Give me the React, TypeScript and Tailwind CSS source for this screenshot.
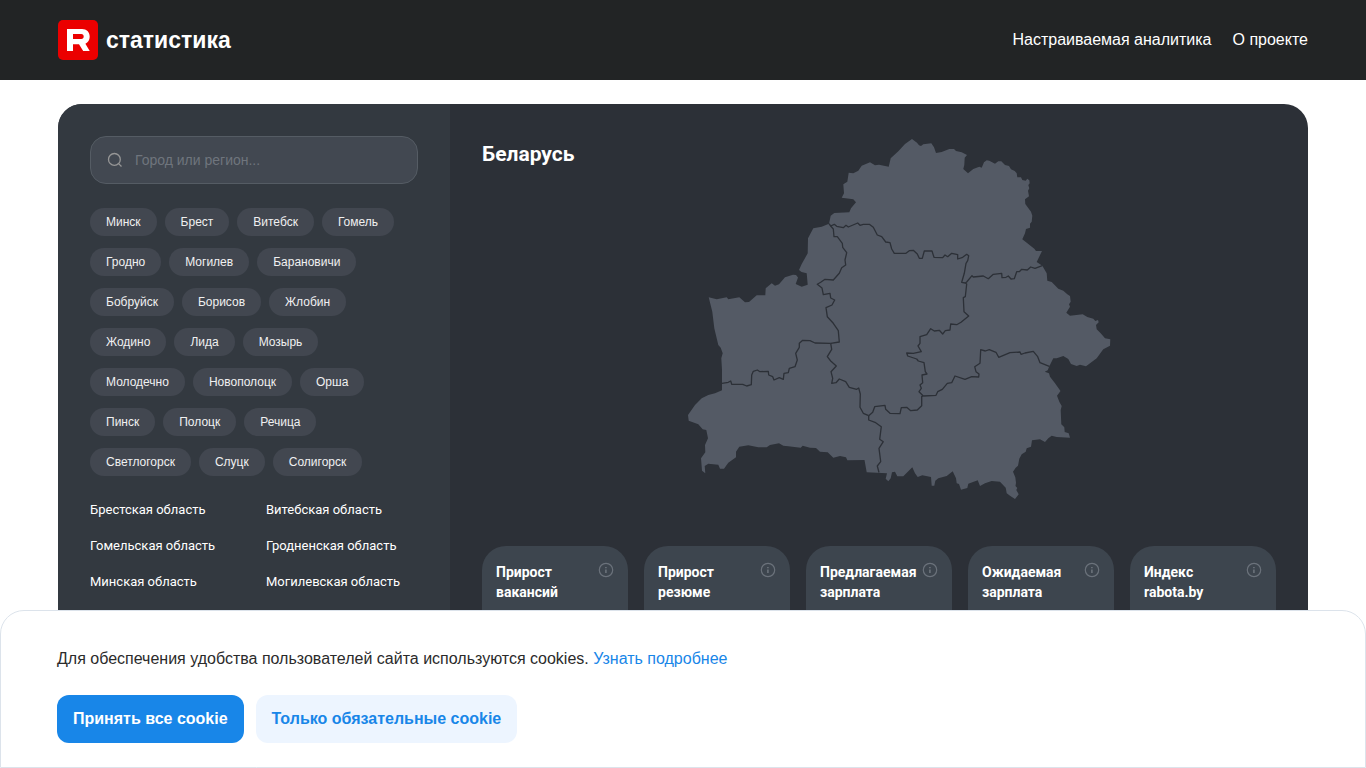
import React from 'react';

const cities = [
  'Минск', 'Брест', 'Витебск', 'Гомель', 'Гродно', 'Могилев', 'Барановичи',
  'Бобруйск', 'Борисов', 'Жлобин', 'Жодино', 'Лида', 'Мозырь', 'Молодечно',
  'Новополоцк', 'Орша', 'Пинск', 'Полоцк', 'Речица', 'Светлогорск', 'Слуцк',
  'Солигорск',
];

const regions = [
  'Брестская область',
  'Витебская область',
  'Гомельская область',
  'Гродненская область',
  'Минская область',
  'Могилевская область',
];

const stats = [
  'Прирост вакансий',
  'Прирост резюме',
  'Предлагаемая зарплата',
  'Ожидаемая зарплата',
  'Индекс rabota.by',
];

// Country outline, clockwise from the northernmost point
const outline =
  'M912 139 L917 142.7 919 145.3 921 146 923.3 144.3 931.3 143.3 934 147.3 936 153 941.7 152 949.3 149 954 149 956 151 961.7 152.3 967 155 964.7 157.7 964.3 165 963.3 169 968 173.3 973.3 169 979.3 166.7 981.7 167.7 984 162.3 986.7 160.3 989.3 160.7 995 163.7 998.3 161.3 1001.3 161.3 1005 165 1009 166 1011 169.3 1014.7 171 1016.7 173.3 1017.3 177.3 1021 177.3 1022.3 180 1025.7 180.7 1027.3 178.7 1029.3 180.3 1029.7 183.3 1028.3 185 1029.3 188.3 1028 190.7 1029 196.3 1025 199.3 1025.3 204 1027.7 207.3 1031 211.7 1032.3 215.7 1031.7 221.7 1030 223.7 1030 227.7 1026 229 1025 233.3 1022.3 239.3 1034.3 248.7 1036 251 1042 251 1036.7 262 1042.3 265.7 1046.7 273.3 1047.3 280.7 1051.7 282 1058.3 288.7 1063.3 290.7 1067.3 294.3 1070 296 1070.7 301.7 1069 304.3 1070 306.7 1066.3 312.7 1070 315.7 1082.7 314.3 1087.3 317 1093.3 318.7 1095.3 321 1098 320 1098.7 322.3 1096 325 1096.7 329.3 1100.7 333.3 1105 338.3 1110.3 339.3 1110 345.7 1103.3 349.3 1100.7 352.7 1096.7 358.3 1091.7 362 1086 366.3 1080 364.7 1076.7 366 1071 364 1068.3 359 1063.3 356 1056.7 358.3 1053.3 358.3 1049.3 366.3 1047.7 370.3 1044.7 371.7 1049 373.3 1050 376.7 1055 383.3 1060.5 391 1057 395.7 1059.3 401.7 1061.7 406 1060.7 410 1061.3 424.3 1064.3 427.3 1064.7 432 1068.7 433.3 1070 437.7 1056.7 437 1051.7 435.7 1048.3 438.3 1045 442 1040 439.3 1032 440.3 1031 446.7 1026.7 448.3 1025.7 451.7 1021.7 454.3 1019.3 458.7 1018 465.7 1015.7 467.7 1013 471.7 1015.3 477.3 1016 482.7 1015.5 486 1017.3 488 1016.3 490 1018.7 494.3 1015 499 1010 495.7 1006.7 493.3 1005.7 487.7 1000 481.7 991.7 481 985 483.3 980 486 977.7 480.3 968.3 483.7 967.3 488 961 489.7 959 484 956.7 483.3 956 478.3 952.7 471.3 946.7 476 938.3 478.3 935.3 480.7 934.3 485.7 931.7 485.7 931 477 922.3 475.3 917.7 477 915 473.3 912.3 467.3 903.3 476.3 897.3 476.3 895 471.7 892 472.3 890.7 478.3 888.3 481.3 885.7 478.7 887 473.3 866.7 472.3 864.5 460 847.3 460.3 846 457.3 840 456 833.3 457.7 827.7 452.3 820 451.7 816 448 810 447.7 802.7 445.7 800.7 447.7 788.3 446.3 783.3 445.7 779 443.3 770 445 766.7 447.3 758.3 447.3 748.3 445.3 739.3 446.7 736 451.7 736 457.3 728.3 462.7 724 468.7 720 468.7 718.3 464.7 708.3 463.7 704.7 466 705.3 473.3 702 470.7 701 458.3 705.3 452.3 705 445 708 438.3 706.3 430 702.7 429.3 698.3 424.3 688.7 420.7 688 415 695 405 701.7 398.3 708.3 395 715 393.3 722 390.3 722 370 721.3 358.3 722.7 353.3 720.7 347.7 718.3 345 714.3 328.3 712.3 311.7 708.7 297.3 716.7 299.3 726.7 297.3 728.3 299.3 739.3 297.3 745 302.3 749 302 756.7 295.3 765.3 295.3 765.7 288.3 771.7 283.3 775 285.7 779 284.3 785 277.3 793 274.7 796 275 798 277.5 795.7 284 801.7 286.7 807.7 284.7 806.7 273.3 801.5 272 799 270 801.7 264 807.7 253.3 808 238.3 813.3 228.3 821.7 226.7 829 223.7 830.7 215.7 834.3 213 849.3 212.3 851 208.3 856 202.3 853.3 199.3 841.7 197.7 844 193.3 843.3 184.3 847.3 181.7 848.7 172.7 853.3 173.3 858.3 170.7 861.7 165.7 870 162.3 875 165.3 879 164.7 888.7 166.7 890.7 158.3 898.3 151.3 905 144 Z';

const borders = [
  // Витебская / Минская
  'M829 223.7 L830.7 226 834.3 224.3 836.7 226.3 843.3 227.7 846 225.3 848.3 227 857.7 223 860 225.3 863.3 224.3 869.3 224.3 873.3 227.3 877.3 235 881.7 236.7 885.7 242 890 242.7 891.7 249 894.3 253.3 906 253.3 909.3 250.7 913.3 250.3 917.3 254 919.3 258.3 922.3 258.3 924.3 251 932 251 934 257.3 942.7 257.7 945 255 947.7 256.7 951.7 253.3 957.7 254.7 957.7 259 962.7 257.3 966.7 254.3 968.7 255.7 967.7 260.7 966 263.3 964.3 273.3 961.7 282.3 965.3 283',
  // Витебская / Могилевская
  'M965.3 283 L966.7 282 972 275.7 973.3 277 983.3 276 988.3 278.7 993.3 274.3 1001.7 273.3 1002 277.7 1006 277.3 1008.3 276 1011 279 1014.3 278.7 1016.7 271.7 1019.3 271.7 1021.7 269.3 1027.3 270 1030.7 267 1035 268.3 1042.3 265.7',
  // Минская / Могилевская
  'M965.3 283 L966.7 284 965.3 296.7 963.3 297.7 964 311.7 968.7 316 961 322.3 956.7 324.7 950.7 324 950 330 945.3 330.7 942.7 334 939.3 330.3 934.3 331 930.7 328.7 926.7 334.7 920 336.7 920 343.3 918 346 921.3 351.7 913.3 353.3 906.7 353 907.7 356 916.7 359 918.3 361 924 362.7 925.3 371.7 927 374 922 375 922.7 382.7 920 385 921.3 388.3 919 391.7 923.3 396',
  // Могилевская / Гомельская
  'M923.3 396 L936 395.3 937.7 391.7 942.3 389.3 947.3 383.3 951.7 382.7 955 376 965 379.3 971.7 376.7 978.7 377 979 374 976 371.7 974.7 366.7 980 363.3 980.7 349.7 985.3 351 989.3 349.7 996 352.3 998.7 357.3 1010 352.7 1020 352 1021 354.3 1025 353 1033.3 351.3 1037.7 356.7 1040 362.7 1049.3 366.3',
  // Минская / Гомельская
  'M923.3 396 L921.7 396.3 921.7 405.7 917.3 410 910.7 410.7 906.7 407.3 901.3 407.7 900 413.7 890 413.3 885.7 409.3 885 405.3 874.7 406.7 872.7 412.3 868.7 415.7',
  // Брестская / Гомельская
  'M868.7 415.7 L868.7 420 875 422.3 881.3 426.7 879.7 439.3 883.3 441.7 879 448.3 880.7 461.7 877.3 466 879 472.5',
  // Гродненская / Минская
  'M830.7 226 L833.3 229 834 236.7 837.3 236.7 842.3 243.3 842.7 247.3 846.7 252.7 845 260 845.7 265 841.7 267.7 839.3 273.3 833.3 280 825 279.3 820.7 282.3 817.3 284.3 822 288 823.3 294.7 830 293.3 830.7 298 834.7 300 832 305 826 307.7 827.3 316.7 833.3 323.3 838.3 330.7 839.3 342 830.7 343.3',
  // Гродненская / Брестская
  'M830.7 343.3 L815 343 810 340.7 802.7 340.3 799.3 343.3 799.3 347.3 795.7 353.3 797.3 360 795 366.7 789.3 368.3 788.3 372.7 784 373.3 783.3 379.3 779.3 377.7 774 380 772.7 376.7 768.7 375 768.3 371.3 760 371.7 757.3 370 753.3 371.3 751.7 375 751.3 384.7 746.7 386 742.7 384.3 731.7 384.3 730.7 381 728.3 382.3 722 383.3',
  // Минская / Брестская
  'M830.7 343.3 L831.7 349.3 827.3 356.7 830.7 361 836.3 366 831 371.7 832.7 378.3 831.7 383.3 836 382.7 839.3 379 845.7 381.7 849.3 387.3 856.7 389.3 858.7 388 860.3 394 860 407.3 863.3 413.3 868.7 415.7',
];

const Logo = () => (
  <a href="#" className="flex items-center gap-2">
    <svg width="40" height="40" viewBox="0 0 40 40" aria-hidden="true">
      <rect width="40" height="40" rx="5" fill="#eb0000" />
      <path
        fill="#fff"
        fillRule="evenodd"
        d="M9 9H24C28.6 9 31.7 12 31.7 16.8C31.7 20 30 22.6 27.4 23.8L31.7 31H25.2L21 24.3H15V31H9ZM15 14V19H23.3C24.9 19 25.7 18 25.7 16.5C25.7 15 24.9 14 23.3 14Z"
      />
    </svg>
    <span className="text-[23px] font-bold text-white">статистика</span>
  </a>
);

const InfoIcon = () => (
  <svg width="16" height="16" viewBox="0 0 16 16" fill="none" aria-hidden="true">
    <circle cx="8" cy="8" r="6.7" stroke="#6b727b" strokeWidth="1.2" />
    <path d="M7.9 7.6V11" stroke="#6b727b" strokeWidth="1.6" />
    <path d="M7.1 5.6H8.7" stroke="#6b727b" strokeWidth="1.2" />
  </svg>
);

const BelarusMap = () => (
  <svg viewBox="482 136 794 394" className="col-start-1 row-start-1 w-full" role="img" aria-label="Карта Беларуси">
    <path d={outline} fill="#545a65" />
    {borders.map((d) => (
      <path key={d} d={d} fill="none" stroke="#2c3037" strokeWidth="1.3" strokeLinejoin="round" />
    ))}
  </svg>
);

const App: React.FC = () => {
  return (
    <div className="min-h-screen bg-white font-['Liberation_Sans',Arial,sans-serif]">
      <header className="flex h-20 items-center justify-between bg-[#222425] px-[58px]">
        <Logo />
        <nav className="flex gap-[21px] text-base text-white">
          <a href="#">Настраиваемая аналитика</a>
          <a href="#">О проекте</a>
        </nav>
      </header>

      <main className="px-[58px] pt-6">
        <div className="flex overflow-hidden rounded-3xl bg-[#2c3037]">
          {/* Sidebar */}
          <aside className="w-[392px] shrink-0 bg-[#333940] p-8">
            <label className="flex h-12 items-center gap-3 rounded-2xl border border-[#555c64] bg-[#424851] px-4">
              <svg width="16" height="16" viewBox="0 0 16 16" fill="none" stroke="#969696" strokeWidth="1.3" aria-hidden="true">
                <circle cx="7.4" cy="7.4" r="5.9" />
                <path d="M11.6 11.6L14.5 14.5" />
              </svg>
              <input
                type="text"
                aria-label="Город или регион"
                placeholder="Город или регион..."
                className="min-w-0 flex-1 bg-transparent text-sm text-white outline-none placeholder:text-[#6f757d]"
              />
            </label>

            <div className="mt-6 flex flex-wrap gap-x-2 gap-y-3">
              {cities.map((city) => (
                <button key={city} type="button" className="h-7 rounded-full bg-[#424750] px-4 text-xs text-[#f0f0f0]">
                  {city}
                </button>
              ))}
            </div>

            <div className="mt-6 grid grid-cols-2 gap-x-6 gap-y-4 font-[Roboto,sans-serif] text-[13px] leading-5 text-white">
              {regions.map((region) => (
                <a key={region} href="#" className="whitespace-nowrap">
                  {region}
                </a>
              ))}
            </div>
          </aside>

          {/* Map and stats */}
          <section className="min-w-0 flex-1 p-8 font-[Roboto,sans-serif] font-bold text-white">
            <div className="grid">
              <h1 className="col-start-1 row-start-1 text-[21px] leading-9">Беларусь</h1>
              <BelarusMap />
            </div>

            <div className="mt-4 grid grid-cols-5 gap-4">
              {stats.map((title) => (
                <div key={title} className="flex h-40 items-start justify-between rounded-3xl bg-[#3d454e] px-3.5 py-4">
                  <h2 className="w-min text-sm leading-5">{title}</h2>
                  <button type="button" aria-label={title}>
                    <InfoIcon />
                  </button>
                </div>
              ))}
            </div>
          </section>
        </div>
      </main>

      {/* Cookie notice */}
      <div className="fixed inset-x-0 bottom-0 rounded-t-3xl border border-[#dce3eb] bg-white px-14 pt-9 pb-6">
        <p className="text-base text-[#2b2b2b]">
          Для обеспечения удобства пользователей сайта используются cookies.{' '}
          <a href="#" className="text-[#1886e8]">
            Узнать подробнее
          </a>
        </p>
        <div className="mt-6 flex gap-3 font-bold">
          <button type="button" className="h-12 rounded-xl bg-[#1886e8] px-4 text-white">
            Принять все cookie
          </button>
          <button type="button" className="h-12 rounded-xl bg-[#edf5ff] px-4 text-[#1886e8]">
            Только обязательные cookie
          </button>
        </div>
      </div>
    </div>
  );
};

export default App;
